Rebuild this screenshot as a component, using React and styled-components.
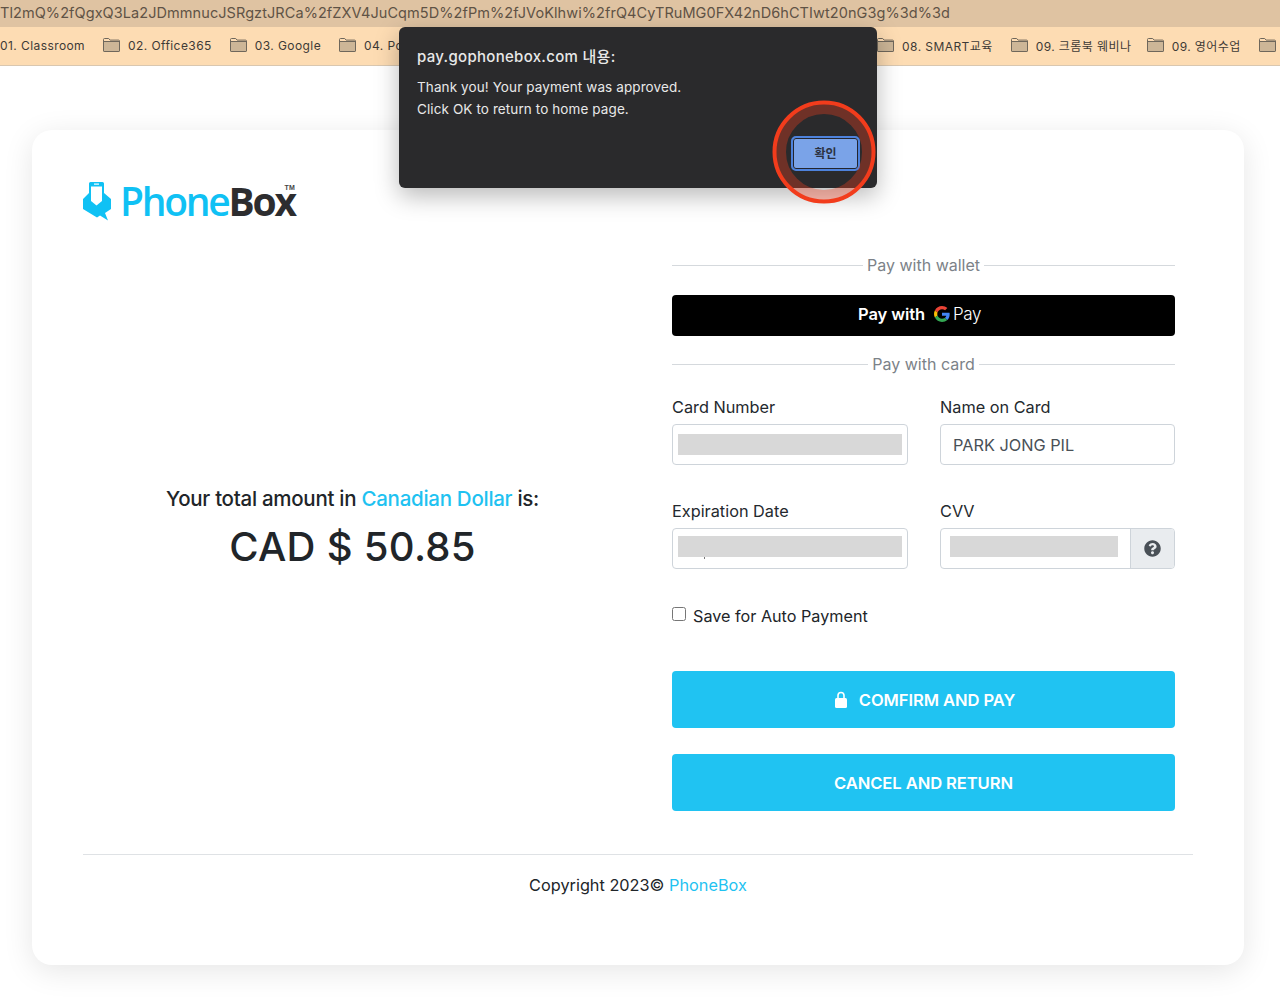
import React from 'react';
import styled, { createGlobalStyle } from 'styled-components';
import { FaQuestionCircle } from 'react-icons/fa';

const GlobalStyle = createGlobalStyle`
  html, body {
    margin: 0;
    padding: 0;
    background: #fff;
    font-family: Inter, "Noto Sans CJK KR", sans-serif;
    color: #212529;
  }
  * { box-sizing: border-box; }
`;

const Page = styled.div`
  position: relative;
  width: 1280px;
  height: 998px;
  overflow: hidden;
`;

const UrlBar = styled.div`
  height: 27px;
  background: #dfc3a2;
  color: #5f5346;
  font-size: 14.5px;
  line-height: 25px;
  white-space: nowrap;
  overflow: hidden;
  letter-spacing: 0.07px;
`;

const BookmarkBar = styled.div`
  height: 39px;
  background: #fddcb3;
  border-bottom: 1px solid #d9c7b0;
  display: flex;
  align-items: center;
  gap: 18px;
  padding-bottom: 2px;
  white-space: nowrap;
  overflow: hidden;
  & > :first-child {
    margin-left: -1px;
    padding-left: 1px;
  }
`;

const Bookmark = styled.div`
  display: flex;
  align-items: center;
  gap: 8px;
  flex: none;
  width: ${(p) => (p.$width ? `${p.$width}px` : 'auto')};
  font-size: 12px;
  letter-spacing: 0.42px;
  color: #3d3a36;
  svg {
    flex: none;
  }
`;

const Card = styled.main`
  margin: 64px 36px 0 32px;
  height: 835px;
  background: #fff;
  border-radius: 20px;
  box-shadow: 0 6px 30px rgba(0, 0, 0, 0.1);
  padding: 50px 51px 0;
`;

const Logo = styled.div`
  display: flex;
  align-items: center;
  height: 42px;
  gap: 9px;
`;

const LogoText = styled.div`
  position: relative;
  font-family: "Open Sans", sans-serif;
  font-size: 39px;
  font-weight: 600;
  letter-spacing: -2.25px;
  line-height: 42px;
  color: #10c1f4;
`;

const LogoDark = styled.span`
  color: #2d2d2f;
  font-weight: 700;
`;

const LogoMark = styled.sup`
  position: absolute;
  top: 4px;
  right: 0;
  font-family: "Liberation Sans", sans-serif;
  font-size: 7px;
  font-weight: 700;
  letter-spacing: 0;
  line-height: 8px;
  color: #444;
`;

const Columns = styled.div`
  display: grid;
  grid-template-columns: 539px 503px;
  column-gap: 50px;
  margin-top: 31px;
`;

const Summary = styled.section`
  text-align: center;
  padding-top: 231px;
`;

const SummaryLine = styled.div`
  font-size: 20.5px;
  font-weight: 500;
  letter-spacing: -0.28px;
  line-height: 30px;
`;

const Accent = styled.span`
  color: #1fc2f1;
`;

const Amount = styled.div`
  font-size: 40px;
  font-weight: 500;
  line-height: 48px;
  margin-top: 9px;
  letter-spacing: 0.3px;
`;

const PayColumn = styled.section`
  display: flex;
  flex-direction: column;
`;

const Divider = styled.div`
  display: flex;
  align-items: center;
  gap: 4px;
  height: 24px;
  color: #7c8288;
  font-size: 16px;
  margin-bottom: ${(p) => p.$after}px;
  &::before, &::after {
    content: '';
    flex: 1;
    height: 1px;
    background: #d5d9dd;
  }
`;

const WalletButton = styled.div`
  height: 41px;
  background: #000;
  border-radius: 4px;
  color: #fff;
  display: flex;
  align-items: center;
  justify-content: center;
  margin-bottom: 16px;
  padding: 0 8px 3px 0;
  font-size: 16.5px;
  font-weight: 600;
  letter-spacing: -0.1px;
`;

const WalletMark = styled.span`
  display: inline-flex;
  align-items: center;
  gap: 3px;
  margin-left: 9px;
  font-weight: 300;
  font-size: 17px;
  letter-spacing: -0.4px;
`;

const FieldGrid = styled.div`
  display: grid;
  grid-template-columns: 236px 235px;
  justify-content: space-between;
  row-gap: 34px;
  margin-top: 19px;
`;

const Field = styled.div`
  display: flex;
  flex-direction: column;
`;

const Label = styled.label`
  font-size: 16.3px;
  line-height: 24px;
  height: 29px;
  color: #24292e;
`;

const InputBox = styled.div`
  position: relative;
  height: 41px;
  border: 1px solid #ced4da;
  border-radius: 4px;
  background: #fff;
  display: flex;
  align-items: stretch;
  overflow: hidden;
  font-size: 16.3px;
  color: #495057;
`;

const InputValue = styled.div`
  padding-left: 12px;
  line-height: 41px;
`;

const Redaction = styled.div`
  height: 21px;
  background: #d8d8d8;
  flex: 1;
  margin: ${(p) => p.$top}px ${(p) => p.$right}px 0 ${(p) => p.$left}px;
`;

// leftover of the digits under the grey box
const Speck = styled.span`
  position: absolute;
  left: 31px;
  top: 28px;
  width: 1px;
  height: 2px;
  background: #777;
`;

const Addon = styled.div`
  width: 44px;
  flex: none;
  background: #e9ecef;
  border-left: 1px solid #ced4da;
  display: flex;
  align-items: center;
  justify-content: center;
  color: #495057;
  font-size: 17px;
`;

const CheckRow = styled.div`
  display: flex;
  align-items: center;
  gap: 7px;
  margin-top: 35px;
  height: 24px;
  font-size: 16.2px;
`;

const CheckBox = styled.input`
  width: 14px;
  height: 14px;
  margin: 0;
  position: relative;
  top: -2px;
`;

const ActionButton = styled.div`
  height: 57px;
  background: #20c3f2;
  border-radius: 4px;
  color: #fff;
  font-size: 16.6px;
  font-weight: 600;
  letter-spacing: -0.1px;
  display: flex;
  align-items: center;
  justify-content: center;
  gap: 12px;
  margin-top: ${(p) => p.$top}px;
  svg {
    margin-left: 3px;
  }
`;

const Footer = styled.footer`
  margin-top: 43px;
  border-top: 1px solid #dfe2e5;
  padding-top: 18px;
  text-align: center;
  font-size: 16.3px;
  line-height: 24px;
`;

const Dialog = styled.div`
  position: absolute;
  left: 399px;
  top: 27px;
  width: 478px;
  height: 161px;
  background: #2a2a2c;
  border-radius: 6px;
  box-shadow: 0 8px 24px rgba(0, 0, 0, 0.28);
  padding: 20px 18px;
  color: #e8e8e8;
`;

const DialogTitle = styled.div`
  font-size: 15px;
  font-weight: 500;
  line-height: 20px;
  letter-spacing: 0.3px;
  margin-bottom: 9px;
`;

const DialogBody = styled.div`
  font-size: 13.5px;
  line-height: 22px;
  letter-spacing: 0.1px;
`;

const DialogButton = styled.div`
  position: absolute;
  left: 392px;
  top: 109px;
  width: 69px;
  height: 35px;
  background: #7aa3e8;
  border: 2px solid #4d82dc;
  outline: 1px solid #23252e;
  outline-offset: -3px;
  border-radius: 5px;
  color: #2b3140;
  font-size: 12px;
  font-weight: 600;
  padding-bottom: 3px;
  display: flex;
  align-items: center;
  justify-content: center;
`;

const Highlight = styled.svg`
  position: absolute;
  left: 770px;
  top: 98px;
  pointer-events: none;
`;

const FolderIcon = () => (
  <svg width="17" height="14" viewBox="0 0 17 14">
    <path d="M.5 3V1.5a1 1 0 0 1 1-1h4.2l1.4 1.6h8.400a1 1 0 0 1 1 1V12.500a1 1 0 0 1-1 1H1.500a1 1 0 0 1-1-1z" fill="#fddcb3" stroke="#6f675b" />
    <path d="M1 4h15v9H1z" fill="#cdb697" />
    <path d="M.5 3.500h16" stroke="#6f675b" fill="none" />
    <path d="M.5 3v9.500a1 1 0 0 0 1 1h14a1 1 0 0 0 1-1V3" stroke="#6f675b" fill="none" />
  </svg>
);

const PhoneBoxIcon = () => (
  <svg width="28" height="39" viewBox="0 0 28 39">
    <path d="M7.500 0H19.500a1.500 1.500 0 0 1 1.500 1.500V11l7 6v10l-6 4 3 7.500-8-5-3 2L0 27V17l6-6V1.500A1.500 1.500 0 0 1 7.500 0z" fill="#10c1f4" />
    <rect x="11" y="1.500" width="5" height="1.200" fill="#fff" />
    <path d="M8 4.500h11V19l-5.500 4.500L8 19z" fill="#fff" />
  </svg>
);

const GoogleG = () => (
  <svg width="16" height="16" viewBox="0 0 48 48">
    <path fill="#EA4335" d="M24 9.500c3.500 0 6.700 1.200 9.200 3.600l6.900-6.900C35.900 2.400 30.500 0 24 0 14.600 0 6.500 5.400 2.600 13.200l8 6.200C12.500 13.700 17.800 9.500 24 9.500z" />
    <path fill="#4285F4" d="M47 24.500c0-1.600-.1-3.100-.4-4.500H24v9h13c-.6 3-2.300 5.500-4.800 7.200l7.700 6c4.500-4.200 7.100-10.300 7.100-17.700z" />
    <path fill="#FBBC05" d="M10.600 28.600c-.5-1.400-.8-3-.8-4.600s.3-3.200.8-4.600l-8-6.200C.9 16.500 0 20.100 0 24s.9 7.500 2.600 10.800z" />
    <path fill="#34A853" d="M24 48c6.500 0 11.900-2.100 15.900-5.800l-7.700-6c-2.200 1.400-4.900 2.300-8.200 2.300-6.200 0-11.500-4.200-13.400-9.900l-8 6.200C6.500 42.600 14.600 48 24 48z" />
  </svg>
);

const LockIcon = () => (
  <svg width="12" height="17" viewBox="0 0 12 17">
    <path d="M3 8V4.500a3 3 0 0 1 6 0V8" fill="none" stroke="#fff" strokeWidth="1.600" />
    <rect x="0" y="7" width="12" height="10" rx="1.500" fill="#fff" />
  </svg>
);

const bookmarks = [
  { id: 1, name: '01. Classroom', plain: true },
  { id: 2, name: '02. Office365' },
  { id: 3, name: '03. Google' },
  { id: 4, name: '04. Portal', width: 520 },
  { id: 8, name: '08. SMART교육' },
  { id: 9, name: '09. 크롬북 웨비나', width: 118 },
  { id: 10, name: '09. 영어수업' },
  { id: 11 },
];

export default function App() {
  return (
    <Page>
      <GlobalStyle />
      <UrlBar>Tl2mQ%2fQgxQ3La2JDmmnucJSRgztJRCa%2fZXV4JuCqm5D%2fPm%2fJVoKlhwi%2frQ4CyTRuMG0FX42nD6hCTIwt20nG3g%3d%3d</UrlBar>
      <BookmarkBar>
        {bookmarks.map((b) => (
          <Bookmark key={b.id} $width={b.width}>
            {!b.plain && <FolderIcon />}
            {b.name && <span>{b.name}</span>}
          </Bookmark>
        ))}
      </BookmarkBar>

      <Card>
        <Logo>
          <PhoneBoxIcon />
          <LogoText>
            Phone<LogoDark>Box</LogoDark>
            <LogoMark>TM</LogoMark>
          </LogoText>
        </Logo>

        <Columns>
          <Summary>
            <SummaryLine>
              Your total amount in <Accent>Canadian Dollar</Accent> is:
            </SummaryLine>
            <Amount>CAD $ 50.85</Amount>
          </Summary>

          <PayColumn>
            <Divider $after={18}>Pay with wallet</Divider>
            <WalletButton>
              Pay with
              <WalletMark>
                <GoogleG />
                Pay
              </WalletMark>
            </WalletButton>
            <Divider $after={0}>Pay with card</Divider>

            <FieldGrid>
              <Field>
                <Label>Card Number</Label>
                <InputBox>
                  <Redaction $top={9} $left={5} $right={5} />
                </InputBox>
              </Field>
              <Field>
                <Label>Name on Card</Label>
                <InputBox>
                  <InputValue>PARK JONG PIL</InputValue>
                </InputBox>
              </Field>
              <Field>
                <Label>Expiration Date</Label>
                <InputBox>
                  <Redaction $top={7} $left={5} $right={5} />
                  <Speck />
                </InputBox>
              </Field>
              <Field>
                <Label>CVV</Label>
                <InputBox>
                  <Redaction $top={7} $left={9} $right={12} />
                  <Addon>
                    <FaQuestionCircle />
                  </Addon>
                </InputBox>
              </Field>
            </FieldGrid>

            <CheckRow>
              <CheckBox type="checkbox" readOnly />
              Save for Auto Payment
            </CheckRow>

            <ActionButton $top={43}>
              <LockIcon />
              COMFIRM AND PAY
            </ActionButton>
            <ActionButton $top={26}>CANCEL AND RETURN</ActionButton>
          </PayColumn>
        </Columns>

        <Footer>
          Copyright 2023© <Accent>PhoneBox</Accent>
        </Footer>
      </Card>

      <Dialog>
        <DialogTitle>pay.gophonebox.com 내용:</DialogTitle>
        <DialogBody>
          Thank you! Your payment was approved.
          <br />
          Click OK to return to home page.
        </DialogBody>
        <DialogButton>확인</DialogButton>
      </Dialog>

      <Highlight width="108" height="108" viewBox="0 0 108 108">
        <circle cx="54" cy="54" r="43" fill="none" stroke="rgba(240, 64, 31, 0.35)" strokeWidth="10" />
        <circle cx="54" cy="54" r="49.500" fill="none" stroke="#f23c1c" strokeWidth="4" />
      </Highlight>
    </Page>
  );
}
